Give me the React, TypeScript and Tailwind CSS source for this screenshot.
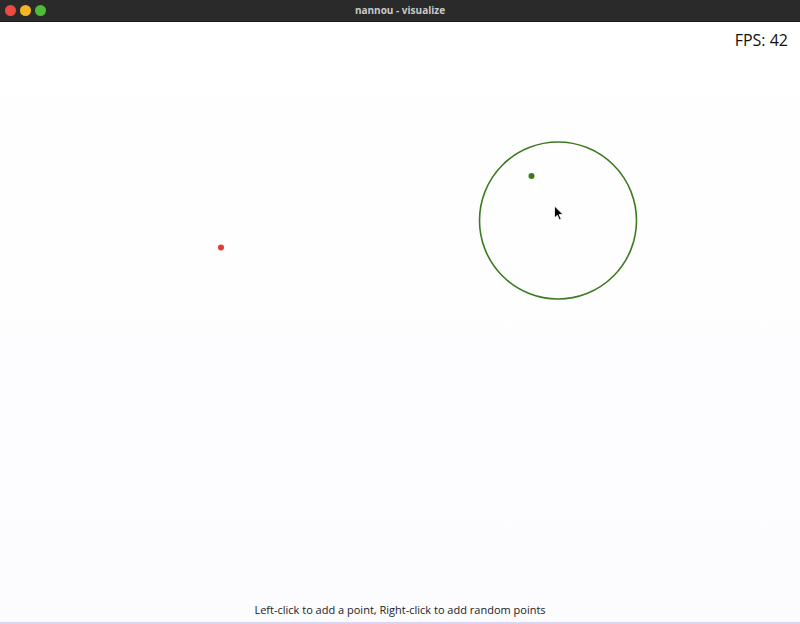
export default function App() {
  return (
    <div className="w-[800px] h-[624px] flex flex-col bg-white overflow-hidden" style={{ fontFamily: '"Open Sans", "Noto Sans", sans-serif' }}>
      {/* title bar */}
      <div className="relative h-[22px] shrink-0 bg-[#2a2a2a] border-b border-[#1a1a1a] flex items-center pl-[5px] gap-[4px]">
        <span className="w-[11px] h-[11px] rounded-full bg-[#ee4a44]" />
        <span className="w-[11px] h-[11px] rounded-full bg-[#f3b428]" />
        <span className="w-[11px] h-[11px] rounded-full bg-[#4cbd35]" />
        <div className="absolute inset-0 flex items-center justify-center text-[10px] font-bold text-[#c9c9c9]">
          nannou - visualize
        </div>
      </div>

      {/* canvas */}
      <div className="relative flex-1 bg-gradient-to-b from-white to-[#fcfbfe] border-b-2 border-[#d9d5f2]">
        <svg className="absolute inset-0" width="800" height="600" viewBox="0 22 800 600">
          <circle cx="558" cy="220.5" r="78.5" fill="none" stroke="#3d7a22" strokeWidth="1.6" />
          <circle cx="531.5" cy="176" r="3" fill="#3a7a1c" />
          <circle cx="221" cy="247.5" r="3" fill="#e03b36" />
          <path d="M554.5 206 L554.5 218 L557.3 215.2 L559.4 220 L561.2 219.2 L559.1 214.5 L563 214.5 Z" fill="#000" stroke="#fff" strokeWidth="0.8" strokeLinejoin="round" />
        </svg>
        <div className="absolute right-[12px] top-[6px] text-[16px] text-[#111]">FPS: 42</div>
        <div className="absolute bottom-[4px] inset-x-0 text-center text-[11px] text-[#222]">
          Left-click to add a point, Right-click to add random points
        </div>
      </div>
    </div>
  );
}
